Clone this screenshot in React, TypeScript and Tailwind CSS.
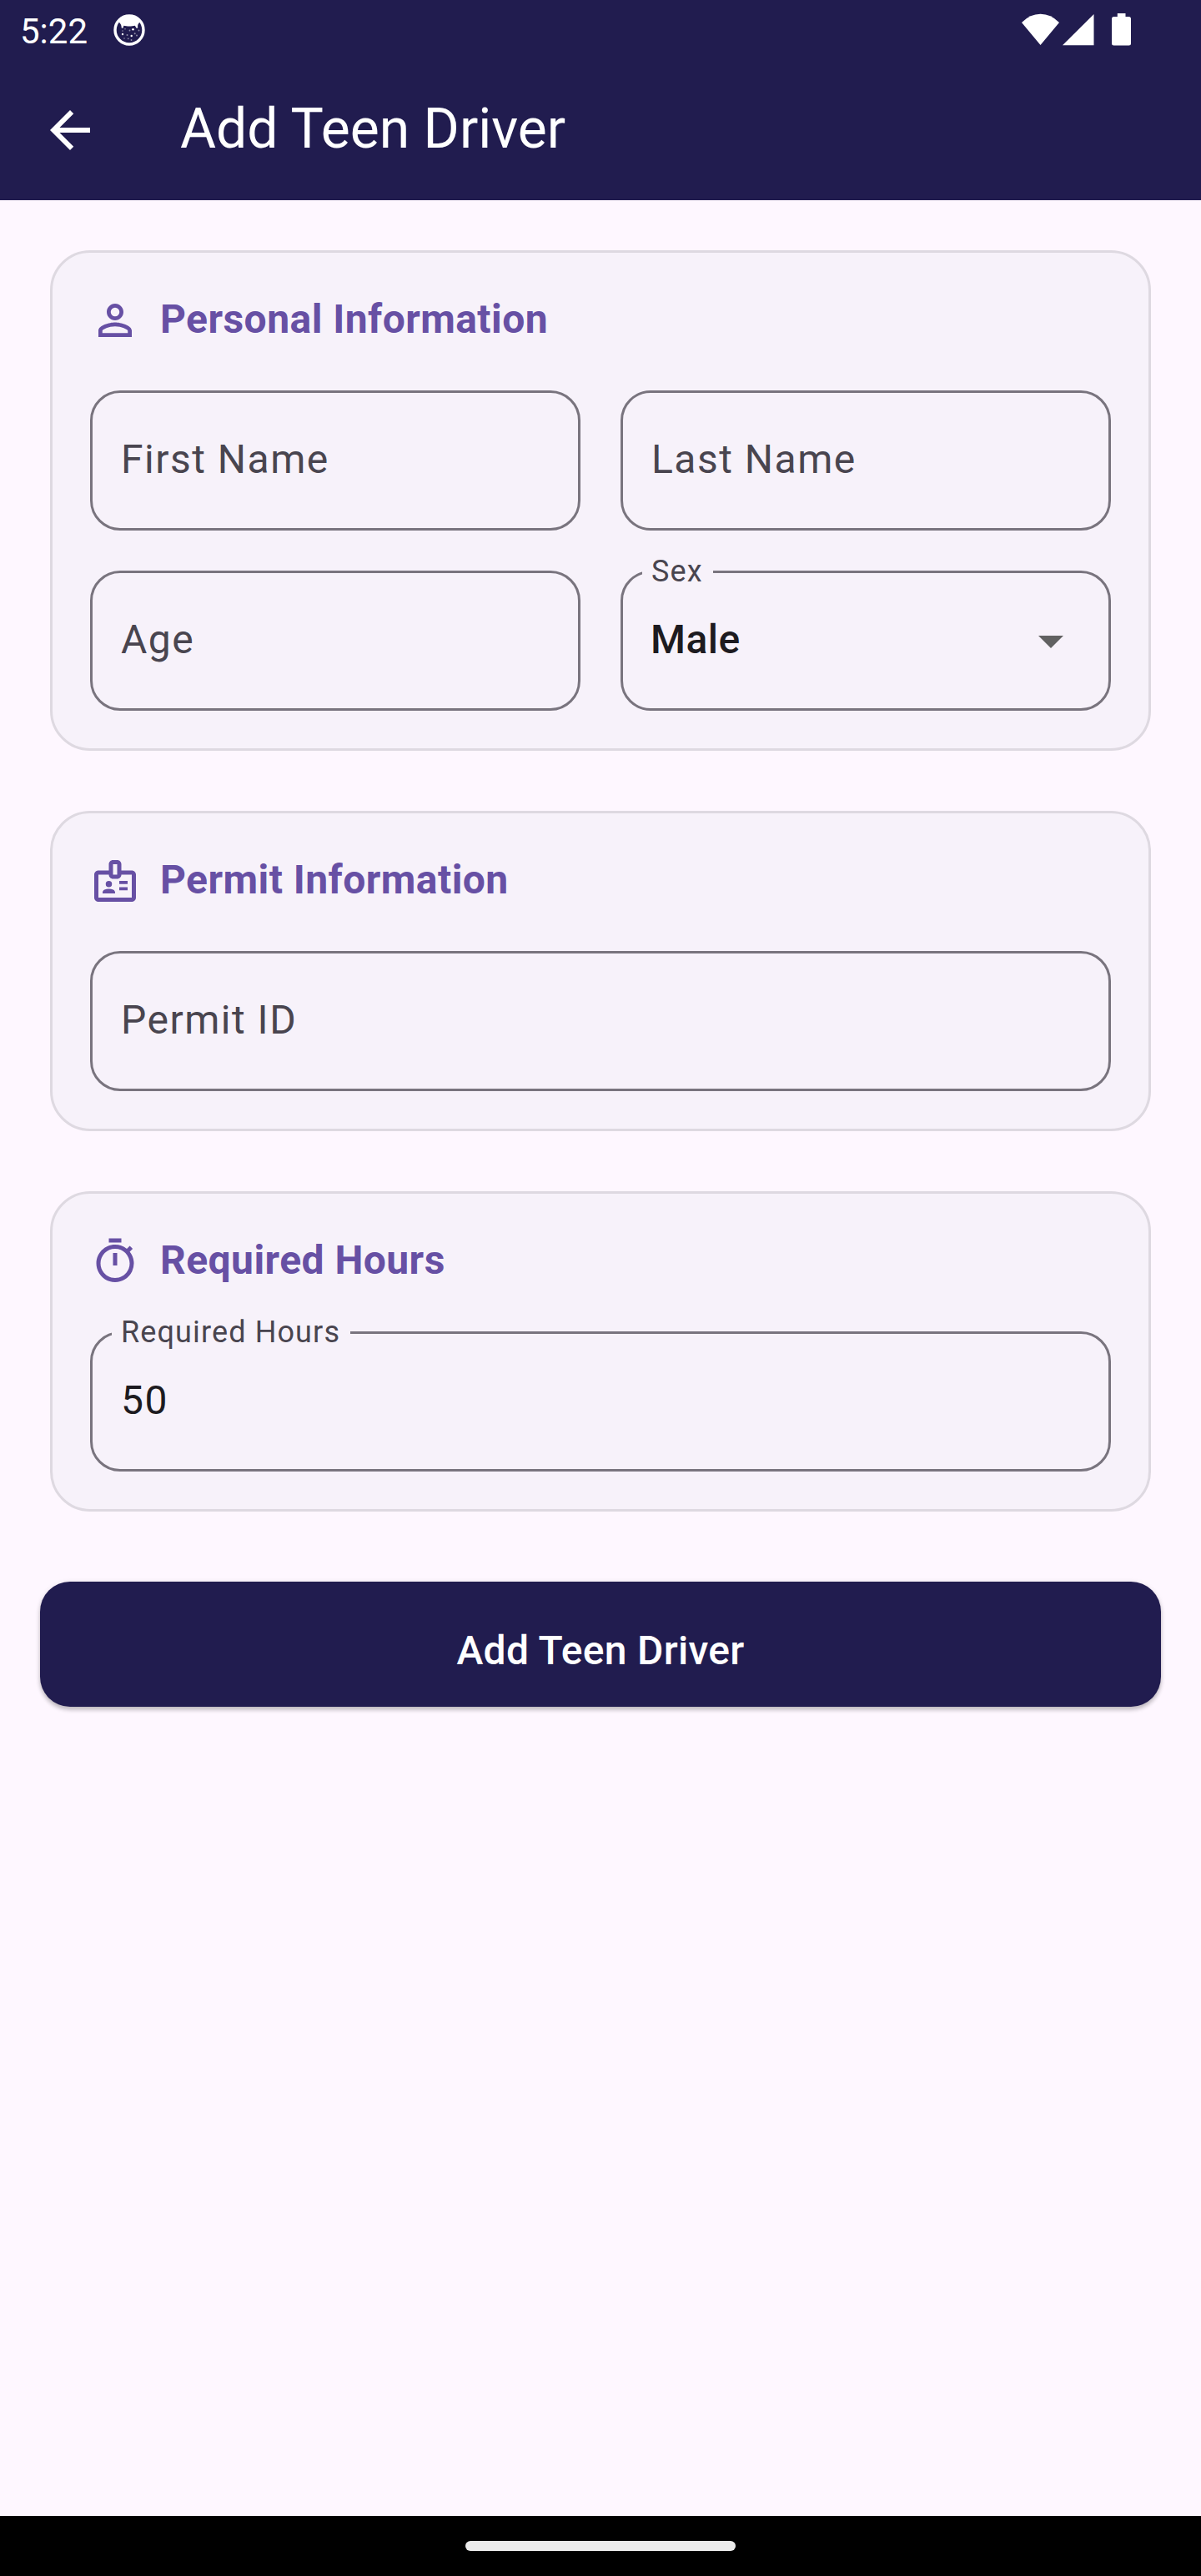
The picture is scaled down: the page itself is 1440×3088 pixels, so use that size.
import type { ReactNode } from "react";
import { MdArrowBack, MdOutlineBadge, MdOutlineTimer, MdPersonOutline } from "react-icons/md";

function Card({ icon, title, children }: { icon: ReactNode; title: string; children: ReactNode }) {
  return (
    <section className="rounded-[48px] border-[3px] border-[#ded9e1] bg-[#f7f2fa] p-[45px]">
      <div className="flex h-[72px] items-center gap-6 text-[#6750a4]">
        {icon}
        <h2 className="pb-[2px] text-[48px] leading-[72px] font-bold tracking-[0.45px] whitespace-nowrap">{title}</h2>
      </div>
      <div className="mt-12">{children}</div>
    </section>
  );
}

function Field({ label, value, select }: { label: string; value?: string; select?: boolean }) {
  return (
    <div className="relative flex h-[168px] items-center justify-between rounded-[36px] border-[3px] border-[#79747e] px-[33px]">
      {value ? (
        <>
          <span className="absolute -top-[23px] left-[23px] bg-[#f7f2fa] pr-3 pl-[11px] text-[36px] leading-[42px] tracking-[1.125px] whitespace-nowrap text-[#49454f]">
            {label}
          </span>
          <span
            className={
              select
                ? "pb-[2px] text-[48px] leading-[72px] font-medium tracking-[0.45px] text-[#1d1b20]"
                : "pb-[2px] pl-px text-[48px] leading-[72px] tracking-[1.5px] text-[#1d1b20]"
            }
          >
            {value}
          </span>
        </>
      ) : (
        <span className="pb-[2px] pl-px text-[48px] leading-[72px] tracking-[1.5px] whitespace-nowrap text-[#49454f]">{label}</span>
      )}
      {select && (
        <svg viewBox="0 0 24 24" className="size-[72px] fill-[#616161]">
          <path d="M7 10l5 5 5-5z" />
        </svg>
      )}
    </div>
  );
}

function StatusBar() {
  return (
    <div className="flex h-[72px] items-center justify-between pr-[84px] pl-6">
      <div className="flex items-center">
        <span className="w-[106px] pt-[3px] text-[42px] leading-[69px]">5:22</span>
        <svg viewBox="0 0 50 50" className="mb-[2px] size-[50px]">
          <circle cx="25" cy="26" r="17" fill="none" stroke="white" strokeWidth="3.4" />
          <path
            fill="white"
            d="M12 15.500C15 10 20 8 25 8S35 10 38 15.500L36 18.500C35.300 19.500 34.800 20.500 35.300 23.500L33.600 23.700L31.800 20.800C28 21.800 22 21.800 18.400 20.800L17.400 23.700L15.700 23.500C15.700 21.500 15.300 19.800 14.300 18.500Z"
          />
          <g fill="white">
            <circle cx="29.500" cy="25.300" r="1.300" />
            <circle cx="17" cy="31" r="1.200" />
            <circle cx="27.700" cy="33" r="1.200" />
            <g opacity="0.5">
              <circle cx="20" cy="24.700" r="0.800" />
              <circle cx="25.500" cy="26.500" r="0.900" />
              <circle cx="17" cy="27" r="0.800" />
              <circle cx="22.500" cy="32" r="1" />
              <circle cx="31.700" cy="30.300" r="1" />
              <circle cx="36.500" cy="26.500" r="0.900" />
              <circle cx="34" cy="32.500" r="0.900" />
              <circle cx="19" cy="36" r="0.800" />
              <circle cx="23.700" cy="36.300" r="0.900" />
              <circle cx="27.500" cy="38" r="0.900" />
            </g>
          </g>
        </svg>
      </div>
      <svg viewBox="0 0 131 40" className="h-10 w-[131px] fill-white">
        <path d="M0 11Q10 0.800 22.500 0.800T45 11L22.500 38Z" />
        <path d="M49 38.300L86.500 1V38.300Z" />
        <path d="M114.800 0H124.500V4H128.500Q131 4 131 6.500V36Q131 38.500 128.500 38.500H110.500Q108 38.500 108 36V6.500Q108 4 110.500 4H114.800Z" />
      </svg>
    </div>
  );
}

export default function App() {
  return (
    <div className="flex h-[3088px] w-[1440px] flex-col bg-[#fef7ff] font-['Roboto',sans-serif]">
      <header className="h-[240px] bg-[#211c4f] text-white">
        <StatusBar />
        <div className="flex h-[168px] items-center pl-12">
          <MdArrowBack className="size-[72px]" />
          <h1 className="ml-24 pb-[2px] text-[66px] leading-[84px] whitespace-nowrap">Add Teen Driver</h1>
        </div>
      </header>
      <main className="flex flex-1 flex-col px-12 pt-[60px]">
        <div className="flex flex-col gap-[72px] px-3">
          <Card title="Personal Information" icon={<MdPersonOutline className="size-[60px]" />}>
            <div className="grid grid-cols-2 gap-12">
              <Field label="First Name" />
              <Field label="Last Name" />
              <Field label="Age" />
              <Field label="Sex" value="Male" select />
            </div>
          </Card>
          <Card title="Permit Information" icon={<MdOutlineBadge className="size-[60px]" />}>
            <Field label="Permit ID" />
          </Card>
          <Card title="Required Hours" icon={<MdOutlineTimer className="size-[60px]" />}>
            <Field label="Required Hours" value="50" />
          </Card>
        </div>
        <button className="mt-[84px] h-[150px] rounded-[36px] bg-[#211c4f] pt-[16px] text-[48px] font-medium tracking-[0.3px] text-white shadow-[0_4px_5px_rgba(0,0,0,0.2),0_1px_6px_rgba(0,0,0,0.1)]">
          Add Teen Driver
        </button>
      </main>
      <footer className="flex h-[72px] justify-center bg-black pt-[30px]">
        <div className="h-3 w-[324px] rounded-full bg-[#ebebeb]" />
      </footer>
    </div>
  );
}
